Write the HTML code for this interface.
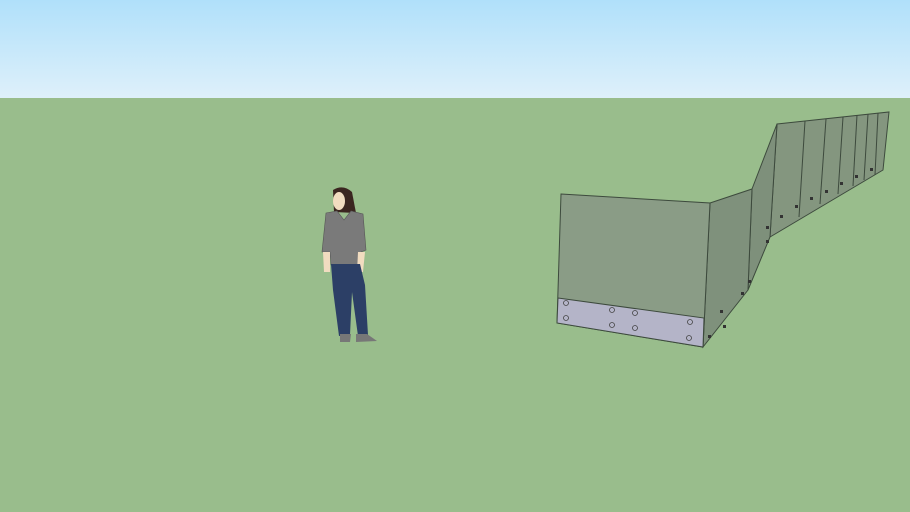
<!DOCTYPE html>
<html><head><meta charset="utf-8"><style>
html,body{margin:0;padding:0;width:910px;height:512px;overflow:hidden;background:#99bd8c}
</style></head><body>
<svg width="910" height="512" viewBox="0 0 910 512" xmlns="http://www.w3.org/2000/svg" style="display:block">
<defs><linearGradient id="sky" x1="0" y1="0" x2="0" y2="1">
<stop offset="0" stop-color="#b0e0fa"/><stop offset="1" stop-color="#def0fa"/></linearGradient></defs>
<rect x="0" y="0" width="910" height="98" fill="url(#sky)"/>
<rect x="0" y="98" width="910" height="414" fill="#99bd8c"/>
<!-- long far wall -->
<polygon points="777,124 889,112 883,170 770,237" fill="#84967f" stroke="#3d4a3d" stroke-width="1"/>
<g stroke="#3d4a3d" stroke-width="1">
<line x1="805" y1="121" x2="799" y2="217"/><line x1="826" y1="119" x2="820" y2="204"/>
<line x1="843" y1="117" x2="838" y2="194"/><line x1="857" y1="115" x2="853" y2="186"/>
<line x1="868" y1="114" x2="864" y2="180"/><line x1="878" y1="113" x2="875" y2="175"/>
</g>
<!-- slanted -->
<polygon points="752,189 777,124 770,237 748,290" fill="#7e907b" stroke="#3d4a3d" stroke-width="1"/>
<!-- side panel -->
<polygon points="710,203 752,189 748,290 703,347" fill="#7f917c" stroke="#3d4a3d" stroke-width="1"/>
<!-- front panel -->
<polygon points="561,194 710,203 703,347 557,323" fill="#8a9c86" stroke="#3d4a3d" stroke-width="1"/>
<polygon points="558,298 704,318 703,347 557,323" fill="#b4b4c8" stroke="#3d4a3d" stroke-width="1"/>
<g fill="none" stroke="#444" stroke-width="0.8">
<circle cx="566" cy="303" r="2.5"/><circle cx="566" cy="318" r="2.5"/>
<circle cx="612" cy="310" r="2.5"/><circle cx="612" cy="325" r="2.5"/>
<circle cx="635" cy="313" r="2.5"/><circle cx="635" cy="328" r="2.5"/>
<circle cx="690" cy="322" r="2.5"/><circle cx="689" cy="338" r="2.5"/>
</g>
<g fill="#333">
<rect x="720" y="310" width="3" height="3"/><rect x="723" y="325" width="3" height="3"/>
<rect x="741" y="292" width="3" height="3"/><rect x="748" y="280" width="3" height="3"/>
<rect x="766" y="226" width="3" height="3"/><rect x="766" y="240" width="3" height="3"/>
<rect x="780" y="215" width="3" height="3"/><rect x="795" y="205" width="3" height="3"/>
<rect x="810" y="197" width="3" height="3"/><rect x="825" y="190" width="3" height="3"/>
<rect x="840" y="182" width="3" height="3"/><rect x="855" y="175" width="3" height="3"/>
<rect x="870" y="168" width="3" height="3"/><rect x="708" y="335" width="3" height="3"/>
</g>
<!-- person -->
<g>
<path d="M333,190 Q343,184 352,192 L356,213 L334,212 Z" fill="#3b2620"/>
<ellipse cx="339" cy="201" rx="6" ry="9" fill="#f1dcc0"/>
<path d="M326,213 L337,211 L344,220 L351,211 L363,214 L366,250 L361,252 L360,266 L331,265 L330,252 L322,252 Z" fill="#7a7a7a" stroke="#555" stroke-width="0.6"/>
<path d="M323,252 L330,252 L330,272 L324,272 Z" fill="#f1dcc0"/>
<path d="M358,252 L365,252 L363,272 L357,272 Z" fill="#f1dcc0"/>
<path d="M331,264 L360,264 L365,285 L368,335 L358,336 L352,292 L350,335 L339,336 L333,290 Z" fill="#2c3f66"/>
<path d="M340,334 L351,334 L350,342 L340,342 Z" fill="#777"/>
<path d="M356,334 L367,334 L377,341 L356,342 Z" fill="#777"/>
</g>
</svg>
</body></html>
